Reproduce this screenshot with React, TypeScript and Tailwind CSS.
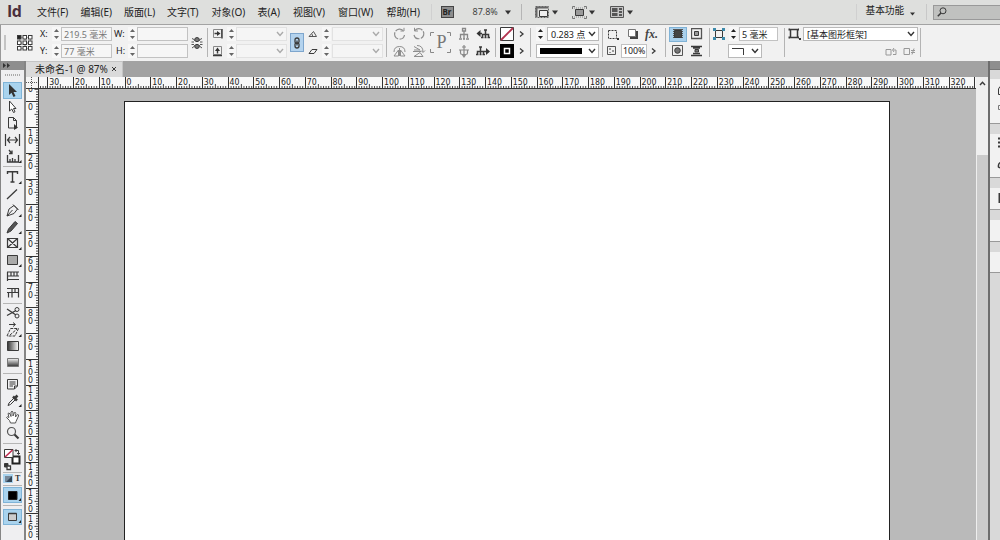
import React from "react";

const Icon = ({ w = 14, h = 14, className = "", children }: any) => (
    <svg
        width={w}
        height={h}
        viewBox={`0 0 ${w} ${h}`}
        fill="none"
        stroke="#3a3a3a"
        className={"shrink-0 " + className}
    >
        {children}
    </svg>
);

const Sep = ({ className = "" }: any) => (
    <div className={"w-px h-[29px] shrink-0 bg-[#b4b4b4] " + className} />
);

// two stacked cells, one for each line of the control bar
const Col = ({ className = "", children }: any) => (
    <div className={"flex flex-col gap-[3px] shrink-0 " + className}>
        {React.Children.map(children, (c) => (
            <div className="h-[14px] flex items-center">{c}</div>
        ))}
    </div>
);

const Spinner = ({ dark }: any) => (
    <Icon w={9} className="bg-[#f7f7f7]">
        <g fill={dark ? "#222" : "#666"} stroke="none">
            <path d="M2 5L4.500 2L7 5z" />
            <path d="M2 9L4.500 12L7 9z" />
        </g>
    </Icon>
);

const Chevron = ({ color = "#333", className = "" }: any) => (
    <Icon w={8} h={6} className={className}>
        <path d="M1 1L4 4.500L7 1" stroke={color} strokeWidth="1.400" />
    </Icon>
);

const Right = () => (
    <Icon w={6} h={8}>
        <path d="M1 1.500L4 4L1 6.500" strokeWidth="1.300" />
    </Icon>
);

const Input = ({ className = "", children }: any) => (
    <div
        className={
            "h-[14px] flex items-center border border-[#c2c2c2] whitespace-nowrap overflow-hidden pl-[2px] text-[9px] leading-none " +
            className
        }
    >
        {children}
    </div>
);

const Combo = ({ dim, className = "", children }: any) => (
    <div
        className={
            "h-[14px] flex items-center justify-between border whitespace-nowrap pl-[3px] pr-[2px] text-[9px] leading-none " +
            (dim ? "border-[#e2e2e2] bg-[#f5f5f5] " : "border-[#b9b9b9] bg-white ") +
            className
        }
    >
        <span className="flex items-center">{children}</span>
        <Chevron color={dim ? "#aaa" : "#333"} />
    </div>
);

const menus = [
    { title: "文件(F)", cls: "w-[43.5px]" },
    { title: "编辑(E)", cls: "w-[43.5px]" },
    { title: "版面(L)", cls: "w-[43px]" },
    { title: "文字(T)", cls: "w-[44.5px]" },
    { title: "对象(O)", cls: "w-[46px]" },
    { title: "表(A)", cls: "w-[35.5px]" },
    { title: "视图(V)", cls: "w-[45px]" },
    { title: "窗口(W)", cls: "w-[48.5px]" },
    { title: "帮助(H)", cls: "w-[44px]" },
];

const Down = ({ className = "" }: any) => (
    <Icon w={6} h={5} className={className}>
        <path d="M0 0.500H6L3 4.500z" fill="#333" stroke="none" />
    </Icon>
);

const MenuBar = () => (
    <div className="h-[25px] flex items-center shrink-0 bg-[#dedfdd] border-b border-[#a3a3a3] text-[10px] text-[#222]">
        <div className="w-[37px] shrink-0 pl-[7px] font-['Open_Sans',sans-serif] text-[16px] leading-none font-bold text-[#4b2f3c] tracking-[-0.5px] pb-[3px]">
            Id
        </div>
        {menus.map((m) => (
            <div key={m.title} className={"shrink-0 whitespace-nowrap " + m.cls}>
                {m.title}
            </div>
        ))}
        <div className="w-px h-4 bg-[#d0d0d0]" />
        <div className="ml-[9px] w-[13px] h-[12px] border border-[#444] bg-[#8d8d8d] text-[#222] text-[8px] leading-[10px] font-bold text-center">
            Br
        </div>
        <div className="ml-[19px] w-[32px] text-[9px] text-[#444]">87.8%</div>
        <Down />
        <div className="ml-[10px] w-px h-4 bg-[#b5b5b5]" />
        <Icon className="ml-[13px]" h={12}>
            <path d="M0.500 0.500H13.500V11.500H0.500z" stroke="#666" strokeDasharray="2 1" />
            <path d="M1 1.500H13M1.500 2V11" strokeWidth="2" stroke="#666" />
            <path d="M4.500 4.500H12.500V10.500H4.500z" fill="#eee" />
        </Icon>
        <Down className="ml-[3px]" />
        <Icon w={15} h={13} className="ml-[14px]">
            <path d="M0.500 3V0.500H3M12 0.500H14.500V3M14.500 10V12.500H12M3 12.500H0.500V10" stroke="#777" />
            <path d="M3.500 3.500H11.500V9.500H3.500z" fill="#999" />
            <path d="M2 2H13M2 11H13" stroke="#888" strokeDasharray="1 1" />
        </Icon>
        <Down className="ml-[2px]" />
        <Icon w={14} h={12} className="ml-[15px]">
            <path d="M0.500 0.500H13.500V11.500H0.500z" fill="#c5c5c5" stroke="#555" />
            <path d="M2 2H7.500V6H2zM2 7H7.500V10H2zM9 2H12V4H9zM9 5H12V7H9zM9 8H12V10H9z" fill="#555" stroke="none" />
        </Icon>
        <Down className="ml-[3px]" />
        <div className="ml-[223px] w-px h-4 bg-[#d0d0d0]" />
        <div className="ml-[9px] w-[44px] shrink-0 text-[9.7px] pb-[2px]">基本功能</div>
        <Icon w={5} h={4} className="mt-[3px]">
            <path d="M0 0.500H5L2.500 3.500z" fill="#333" stroke="none" />
        </Icon>
        <div className="ml-[11px] w-px h-4 bg-[#c8c8c8]" />
        <div className="ml-[6px] flex-1 h-[15px] flex items-center border border-r-0 border-[#999] bg-[#c0c1bf] pl-[3px]">
            <Icon w={10} h={10}>
                <circle cx="6" cy="3.800" r="3" />
                <path d="M4 6L0.800 9.300" strokeWidth="1.500" />
            </Icon>
        </div>
    </div>
);

const points = [0, 1, 2, 3, 4, 5, 6, 7, 8];

const ControlBar = () => (
    <div className="h-[36px] flex items-center shrink-0 bg-[#f1f1f1] border-l border-[#999] pb-[1px] text-[9px] text-[#222]">
        <div className="ml-[3px] w-[2px] h-[15px] shrink-0 bg-[#c4c4c4]" />
        <Icon w={16} h={16} className="ml-[11px]">
            <path d="M2.500 2.500H13.500V13.500H2.500zM8 2V14M2 8H14" stroke="#777" strokeDasharray="1 1" />
            {points.map((i) => (
                <rect
                    key={i}
                    x={0.5 + (i % 3) * 5.5}
                    y={0.5 + Math.floor(i / 3) * 5.5}
                    width="3.500"
                    height="3.500"
                    fill={i === 0 ? "#222" : "#fff"}
                />
            ))}
        </Icon>
        <Col className="ml-[7px] w-[12px]">
            <span>X:</span>
            <span>Y:</span>
        </Col>
        <Col className="w-[9px]">
            <Spinner />
            <Spinner />
        </Col>
        <Col className="w-[53px] text-[#777]">
            <Input className="w-[51px] bg-[#f6f6f6]">219.5 毫米</Input>
            <Input className="w-[51px] bg-[#f6f6f6]">77 毫米</Input>
        </Col>
        <Col className="w-[14px]">
            <span>W:</span>
            <span className="pl-[2px]">H:</span>
        </Col>
        <Col className="w-[9px]">
            <Spinner />
            <Spinner />
        </Col>
        <Col className="w-[51px]">
            <Input className="w-[51px] bg-[#f6f6f6]" />
            <Input className="w-[51px] bg-[#f6f6f6]" />
        </Col>
        <Icon w={12} className="ml-[3px]">
            <path d="M3.500 4.500Q3.500 1.500 6 1.500T8.500 4.500Q6 7 3.500 4.500zM3.500 9.500Q3.500 12.500 6 12.500T8.500 9.500Q6 7 3.500 9.500z" fill="#777" />
            <path d="M1 2.500L3 3.500M11 2.500L9 3.500M0.500 6H3M9 6H11.500M0.500 8.500H3M9 8.500H11.500M1 12L3 10.500M11 12L9 10.500" stroke="#555" />
        </Icon>
        <Sep className="ml-[4px]" />
        <Col className="ml-[4px] w-[15px]">
            <Icon w={12} h={12}>
                <path d="M1.500 1.500H9.500V9.500H1.500z" stroke="#888" />
                <path d="M10 1V10.500M2.500 5.500H6" strokeWidth="1.400" />
                <path d="M5 3L8.500 5.500L5 8z" fill="#333" stroke="none" />
            </Icon>
            <Icon w={12} h={12}>
                <path d="M1.500 1.500H9.500V9.500H1.500z" stroke="#888" />
                <path d="M1 10.500H10M5.500 8.500V6" strokeWidth="1.400" />
                <path d="M3 6L5.500 2.500L8 6z" fill="#333" stroke="none" />
            </Icon>
        </Col>
        <Col className="w-[9px]">
            <Spinner />
            <Spinner />
        </Col>
        <Col className="w-[51px]">
            <Combo dim className="w-[51px]" />
            <Combo dim className="w-[51px]" />
        </Col>
        <div className="ml-[3px] w-[14px] h-[19px] shrink-0 flex items-center justify-center bg-[#b4d3ee] border border-[#7ea6cd]">
            <Icon w={8} h={12}>
                <path d="M2 5V3Q2 1 4 1T6 3V5Q6 6 4 6T2 5M2 7V9Q2 11 4 11T6 9V7Q6 6 4 6T2 7M4 3.500V8.500" strokeWidth="1.300" />
            </Icon>
        </div>
        <Col className="ml-[4px] w-[14px]">
            <Icon w={10} h={10}>
                <path d="M1 7.500H8.500L5.500 2.500zM4.500 7Q4.500 5.500 3.800 5" stroke="#555" />
            </Icon>
            <Icon w={10} h={10}>
                <path d="M1 7.500L4 3.500H9L6 7.500z" />
            </Icon>
        </Col>
        <Col className="w-[9px]">
            <Spinner />
            <Spinner />
        </Col>
        <Col className="ml-px w-[51px]">
            <Combo dim className="w-[51px]" />
            <Combo dim className="w-[51px]" />
        </Col>
        <Sep className="ml-[3px]" />
        <Col className="ml-[6px] w-[19px]">
            <Icon>
                <path d="M10 3.500A5 5 0 1 0 11.500 8" stroke="#8d8d8d" strokeWidth="1.200" strokeDasharray="8 1.500" />
                <path d="M7.500 4H11V0.800" stroke="#8d8d8d" />
            </Icon>
            <Icon>
                <path d="M1 12L5.500 6V12zM12 12L7.500 6V12zM1 8Q1 2.500 6.500 2.500T12 8M6.500 4V12" stroke="#8d8d8d" />
            </Icon>
        </Col>
        <Col className="w-[18px]">
            <Icon>
                <path d="M3 3.500A5 5 0 1 1 2 8" stroke="#8d8d8d" strokeWidth="1.200" strokeDasharray="8 1.500" />
                <path d="M6 4H2.500V0.800" stroke="#8d8d8d" />
            </Icon>
            <Icon>
                <path d="M2 2.500L8 6H2M2 12.500L8 8.500L11 12.500zM5 1.500Q11 1.500 11 8M9 6.500L11 8.500L13 6.500M1 7.500H9" stroke="#8d8d8d" />
            </Icon>
        </Col>
        <div className="w-[23px] h-[22px] shrink-0 relative flex items-center justify-center font-['Liberation_Serif',serif] text-[18px] text-[#777]">
            P
            <svg width="22" height="22" fill="none" stroke="#888" className="absolute left-0 top-0">
                <path d="M0.500 4V0.500H4M17 0.500H20.500V4M20.500 17V20.500H17M4 20.500H0.500V17" />
            </svg>
        </div>
        <Col className="ml-[5px] w-[18px]">
            <Icon w={12}>
                <path d="M4.500 1.500H7.500V4H4.500zM6 4V12M2.500 11V7.500H9.500V11M1 12H4M5 12H7M8 12H11" stroke="#888" strokeWidth="1.300" />
            </Icon>
            <Icon w={12}>
                <path d="M6 1V12.500M1 6H11M2.500 6V9Q2.500 10.500 4.500 10.500H7.500Q9.500 10.500 9.500 9V6M4 3H8M4.500 11L6 13L7.500 11" stroke="#888" strokeWidth="1.200" />
            </Icon>
        </Col>
        <Col className="w-[16px]">
            <Icon>
                <path d="M3.500 6.500H6M9.500 3V7M6.500 11V7.500H12.500V11M9.500 7V11M5 10.500H7.500M8.500 10.500H10.500M11.500 10.500H14M8 3H11" strokeWidth="1.500" />
                <path d="M4.500 3V10L0.500 6.500z" fill="#333" stroke="none" />
            </Icon>
            <Icon>
                <path d="M4.500 3V7M1.500 11V7.500H7.500V11M4.500 7V11M0 10.500H2.500M3.500 10.500H5.500M6.500 10.500H9M3 3H6M8 7.500H11" strokeWidth="1.500" />
                <path d="M10 4V11L14 7.500z" fill="#333" stroke="none" />
            </Icon>
        </Col>
        <Sep className="ml-[3px]" />
        <Col className="ml-[4px] w-[18px]">
            <Icon>
                <path d="M0.500 0.500H13.500V13.500H0.500z" fill="#fff" />
                <path d="M1 13L13 1" stroke="#b3334f" strokeWidth="1.800" />
            </Icon>
            <Icon>
                <path d="M0 0H14V14H0z" fill="#000" stroke="none" />
                <path d="M4.500 4.500H9.500V9.500H4.500z" stroke="#fff" strokeWidth="1.500" />
            </Icon>
        </Col>
        <Col className="ml-px w-[7px]">
            <Right />
            <Right />
        </Col>
        <Sep className="ml-[4px]" />
        <Col className="ml-[5px] w-[63px]">
            <>
                <Spinner dark />
                <Combo className="ml-[2px] w-[52px]">0.283 点</Combo>
            </>
            <Combo className="w-[63px]">
                <div className="w-[42px] h-[6px] bg-black" />
            </Combo>
        </Col>
        <Sep className="ml-[3px]" />
        <Col className="ml-[4px] w-[56px]">
            <>
                <Icon w={12}>
                    <path d="M1.500 3.500H9.500V11.500H1.500z" strokeDasharray="2 1" />
                    <path d="M10 11H12V13H10z" fill="#333" stroke="none" />
                </Icon>
                <Icon w={12} className="ml-[8px]">
                    <path d="M3 4H11V12H3z" fill="#444" stroke="none" />
                    <path d="M1.500 2.500H8.500V9.500H1.500z" fill="#fff" stroke="#777" />
                </Icon>
                <span className="ml-[6px] font-['Liberation_Serif',serif] italic font-bold text-[12px] leading-none text-[#444]">
                    fx.
                </span>
            </>
            <>
                <Icon w={10} h={10}>
                    <path d="M0.500 0.500H8.500V8.500H0.500z" stroke="#555" />
                    <path d="M2 2H4V4H2zM5 4H7V6H5zM2 6H4V7H2z" fill="#999" stroke="none" />
                </Icon>
                <div className="ml-[4px] w-[26px] h-[14px] flex items-center bg-white border border-[#c2c2c2] pl-px text-[8.8px] leading-none">
                    100%
                </div>
                <div className="ml-[4px]">
                    <Right />
                </div>
            </>
        </Col>
        <Sep className="ml-[2px]" />
        <Col className="ml-[3px] w-[22px]">
            <div className="w-[18px] h-[15px] flex items-center justify-center bg-[#a9d0ec] border border-[#7fb2d6]">
                <Icon w={12} h={12}>
                    <path d="M1 1.500H11M1 3.500H11M1 5.500H11M1 7.500H11M1 9.500H11" stroke="#555" />
                    <path d="M2.500 2.500H9.500V9.500H2.500z" fill="#444" />
                </Icon>
            </div>
            <Icon w={12} h={12} className="ml-[3px]">
                <path d="M0.500 0.500H10.500V10.500H0.500z" fill="#eee" stroke="#555" />
                <circle cx="5.500" cy="5.500" r="2.800" fill="#777" />
            </Icon>
        </Col>
        <Col className="w-[14px]">
            <Icon w={12} h={12}>
                <path d="M0.500 0.500H10.500V10.500H0.500z" stroke="#555" strokeWidth="1.300" />
                <path d="M3.500 3.500H7.500V7.500H3.500z" fill="#999" />
            </Icon>
            <Icon w={12} h={12}>
                <path d="M0 1.500H11M0 10.500H11M2 3H9M2 8.500H9" strokeWidth="1.300" />
                <path d="M4 4.500H7.500V7H4z" fill="#777" />
            </Icon>
        </Col>
        <Sep className="ml-[4px]" />
        <Col className="ml-[3px] w-[65px]">
            <>
                <Icon w={13} h={12}>
                    <path d="M2.500 2.500H9.500V9.500H2.500z" />
                    <path d="M0 0H3V3H0zM9 0H12V3H9zM0 9H3V12H0zM9 9H12V12H9z" fill="#3b89aa" stroke="none" />
                </Icon>
                <div className="ml-[3px]">
                    <Spinner dark />
                </div>
                <Input className="ml-px w-[39px] bg-white">5 毫米</Input>
            </>
            <Combo className="ml-[15px] w-[34px]">
                <Icon w={13} h={9}>
                    <path d="M0 1.500H11.500V8" />
                </Icon>
            </Combo>
        </Col>
        <Sep className="ml-[6px]" />
        <Col className="ml-[3px] w-[130px]">
            <>
                <Icon w={13} h={12}>
                    <path d="M2.500 1.500H9.500V9.500H2.500z" strokeWidth="1.500" />
                    <path d="M0.500 1.500H2M0.500 9.500H2M10 1.500H11M10 9.500H11" strokeWidth="2" />
                    <path d="M11 10H13V12H11z" fill="#333" stroke="none" />
                </Icon>
                <Combo className="ml-[2px] w-[115px]">[基本图形框架]</Combo>
            </>
            <div className="ml-[97px] flex gap-[5px]">
                <Icon w={13} h={9}>
                    <path d="M1 2.500H6V8H1zM9 1L7.500 3L9 5M8 3H11V7.500H8" stroke="#999" />
                </Icon>
                <Icon w={13} h={9}>
                    <path d="M1 1.500H6.500V7.500H1zM8 3.500H12M8 5.500H12M11 1.500L9 7.500" stroke="#999" />
                </Icon>
            </div>
        </Col>
        <Sep className="ml-[2px]" />
    </div>
);

const Corner = () => <path d="M18.500 15V12L15.500 15z" fill="#222" stroke="none" />;

const Tool = ({ active, children }: any) => (
    <div
        className={
            "h-[16.5px] w-[19px] flex items-center justify-center shrink-0 " +
            (active ? "bg-[#a9d3ee] outline outline-1 -outline-offset-1 outline-[#7fb4d8]" : "")
        }
    >
        <Icon w={19} h={16}>
            {children}
        </Icon>
    </div>
);

const Divider = ({ className = "h-[4.5px]" }: any) => (
    <div className={"w-[19px] flex items-center shrink-0 " + className}>
        <div className="h-px w-full bg-[#b5b5b5]" />
    </div>
);

const Toolbox = () => (
    <div className="w-[26px] shrink-0 flex flex-col bg-[#efeff1] border-l border-r-2 border-[#858585]">
        <div className="h-[9px] shrink-0 bg-[#8e8e8e] pl-[2px] pt-[2px]">
            <Icon w={8} h={5}>
                <path d="M0 0L3 2.500L0 5zM4 0L7 2.500L4 5z" fill="#333" stroke="none" />
            </Icon>
        </div>
        <div className="h-[12px] shrink-0 pt-[4px] pl-[4px]">
            <div className="w-[15px] h-[2px] border-y border-dotted border-[#aaa]" />
        </div>
        <div className="flex flex-col pl-[2px]">
            <Tool active>
                <path d="M6 2V13L8.500 10.800L10.500 15L12.500 14L10.500 10H14z" fill="#333" stroke="none" />
            </Tool>
            <Tool>
                <path d="M6.500 2V12L8.800 10L10.500 13.500L12 12.800L10.500 9.500H13z" fill="#fff" />
            </Tool>
            <Tool>
                <path d="M5.500 2.500H10.500L13.500 5.500V13H5.500zM10.500 2.500V5.500H13.500" />
                <path d="M11 9V15L15 12.500z" fill="#333" stroke="none" />
            </Tool>
            <Tool>
                <path d="M2.500 2V14M16.500 2V14M4.500 8H14.500M7 5L4.500 8L7 11M12 5L14.500 8L12 11" strokeWidth="1.200" />
            </Tool>
            <Tool>
                <path d="M4.500 7V14H15.500V7M7 13.500V11M9.500 13.500V10M12 13.500V11M6 2L8.500 5M9 2.500V5.500H6" strokeWidth="1.300" />
                <Corner />
            </Tool>
            <Divider />
            <Tool>
                <path d="M4.500 5V2.700H14.500V5M9.500 2.700V13M7.500 13H11.500" strokeWidth="1.400" />
                <Corner />
            </Tool>
            <Tool>
                <path d="M4 13L14 3.500" strokeWidth="1.300" />
            </Tool>
            <Tool>
                <path d="M4 14L6 7L11 3.500L14.500 7L11 11.500zM4 14L9.500 8M10 2.500L15.500 8" />
                <Corner />
            </Tool>
            <Tool>
                <path d="M4 14L5.500 10L12 2.500L14.500 4.500L8 12z" fill="#555" />
                <Corner />
            </Tool>
            <Tool>
                <path d="M4.500 3.500H14.500V12.500H4.500zM4.500 3.500L14.500 12.500M14.500 3.500L4.500 12.500" strokeWidth="1.200" />
                <Corner />
            </Tool>
            <Tool>
                <path d="M4.500 3.500H14.500V12.500H4.500z" fill="#aaa" />
                <Corner />
            </Tool>
            <Tool>
                <path d="M4 4H16M4 8H16M4 11.500H16M4.500 4V13M8 4V8M11 4V8M14 4V8" strokeWidth="1.200" />
            </Tool>
            <Tool>
                <path d="M4 3.500H16M4 7.500H16M5.500 8V12.500M9 4V12.500M12 4V8M15.500 4V12.500" strokeWidth="1.200" />
            </Tool>
            <Divider className="h-[4px]" />
            <Tool>
                <path d="M4 4L13 10M4 10.500L13 5.500" strokeWidth="1.300" />
                <circle cx="14" cy="4.500" r="2" />
                <circle cx="14" cy="11" r="2" />
            </Tool>
            <Tool>
                <path d="M4 14L7.500 6.500H15.500L12 14zM7 13L14 7" strokeDasharray="3 1" />
                <path d="M6 2.500H12M10 0.500L12.500 2.500L10 4.500" />
                <Corner />
            </Tool>
            <Tool>
                <defs>
                    <linearGradient id="gx">
                        <stop offset="0" stopColor="#333" />
                        <stop offset="1" stopColor="#fff" />
                    </linearGradient>
                    <linearGradient id="gy" x2="0" y2="1">
                        <stop offset="0" stopColor="#f5f5f5" />
                        <stop offset="1" stopColor="#333" />
                    </linearGradient>
                </defs>
                <path d="M4.500 3.500H15.500V12.500H4.500z" fill="url(#gx)" />
            </Tool>
            <Tool>
                <path d="M4.500 3.500H15.500V11.500H4.500z" fill="url(#gy)" stroke="#777" />
            </Tool>
            <Divider />
            <Tool>
                <path d="M4.500 3.500H14.500V10L11.500 13H4.500zM11.500 13V10H14.500M6.500 6H12.500M6.500 8H12.500M6.500 10H10" />
            </Tool>
            <Tool>
                <path d="M5 13.500L6 11L11 6L12.500 7.500L7.500 12.500z" />
                <path d="M10 4.500L14 8.500M12 6L14.500 3.500" strokeWidth="2.500" />
                <Corner />
            </Tool>
            <Tool>
                <path
                    d="M6.500 11.500L3.500 8.500Q4 7 6 8.500L5 4.500Q6 3.200 7 5L8 7.500V3Q9 1.500 10 3V7L11.500 3.500Q12.800 3 12.800 4.500L12.500 8L14.500 5.500Q16 5.500 15.500 7L13 12.500L12.500 14H7.500z"
                    fill="#fff"
                    stroke="#555"
                />
            </Tool>
            <Tool>
                <circle cx="8.500" cy="6.500" r="4" strokeWidth="1.200" stroke="#555" />
                <path d="M11.500 9.500L15.500 13.500" strokeWidth="2.200" />
            </Tool>
            <Divider className="h-[3px]" />
            <Icon w={20} h={27}>
                <path d="M9.500 11.500H16.500V18.500H9.500z" stroke="#222" strokeWidth="2" fill="#fff" />
                <path d="M1.500 4.500H10V12.500H1.500z" fill="#fff" />
                <path d="M2 12L9.500 5" stroke="#c02a50" strokeWidth="1.600" />
                <path d="M12 5.500H15.500V9M13.500 4L12 5.500L13.500 7M14 8L15.500 9.500L17 8" />
                <path d="M1.500 18.500H5V22H1.500z" fill="#333" />
                <path d="M4 21H7.500V24.500H4z" fill="#fff" strokeWidth="1.300" />
            </Icon>
            <Divider className="h-[2px]" />
            <div className="h-[10px] flex items-center">
                <div className="w-[10px] h-[9px] flex items-center justify-center bg-[#a9d3ee]">
                    <Icon w={7} h={6}>
                        <path d="M0 0H7V6H0z" fill="#789" stroke="none" />
                        <path d="M7 0V6H1z" fill="#345" stroke="none" />
                    </Icon>
                </div>
                <span className="ml-[2px] font-['Liberation_Serif',serif] text-[8px] leading-none font-bold text-[#333]">
                    T
                </span>
            </div>
            <Divider className="h-[3px]" />
            <div className="w-[19px] h-[16px] bg-[#a9d3ee] border border-[#7fb4d8] shrink-0">
                <Icon w={17} h={14}>
                    <path d="M4.500 3.500H13V11.500H4.500z" fill="#000" stroke="#222" />
                    <path d="M17 13V10L14.500 13z" fill="#222" stroke="none" />
                </Icon>
            </div>
            <Divider className="h-[6px]" />
            <div className="w-[19px] h-[16px] bg-[#a9d3ee] border border-[#7fb4d8] shrink-0">
                <Icon w={17} h={14}>
                    <path d="M4.500 3.500H12.500V10.500H4.500z" fill="#ccc" />
                    <path d="M4.500 3.500H12.500" strokeWidth="1.500" />
                    <path d="M17 13V10L14.500 13z" fill="#222" stroke="none" />
                </Icon>
            </div>
        </div>
    </div>
);

const STEP = 25.75;
const minor = [1, 2, 3, 4, 5, 6, 7, 8, 9];
const across = Array.from({ length: 38 }, (_, i) => i - 4);
const down = Array.from({ length: 18 }, (_, i) => i - 1);

const TopRuler = () => (
    <div className="h-[12px] flex-1 min-w-0 overflow-hidden bg-[#f8f8f8] border-b border-[#333]">
        <div className="flex -ml-[17.5px]">
            {across.map((n) => (
                <div
                    key={n}
                    className="w-[25.75px] h-[11px] shrink-0 relative pl-[2px] text-[8.7px] leading-[11px] text-[#222]"
                >
                    {n > -4 && n < 33 && Math.abs(n) * 10}
                    <svg width="26" height="11" stroke="#333" className="absolute left-0 top-0">
                        <path d="M0.500 0V11" />
                        {minor.map((m) => (
                            <path key={m} d={`M${0.5 + (m * STEP) / 10} ${m === 5 ? 7 : 9}V11`} strokeWidth="0.900" />
                        ))}
                    </svg>
                </div>
            ))}
        </div>
    </div>
);

// the first cell starts above the visible part, so its leading digit is left blank
const SideRuler = () => (
    <div className="w-[13px] shrink-0 overflow-hidden bg-[#f8f8f8] border-r border-[#333]">
        <div className="-mt-[13.5px]">
            {down.map((n) => (
                <div
                    key={n}
                    className="h-[25.75px] relative flex flex-col pt-[1.5px] pl-[2px] text-[8.7px] leading-[8px] text-[#222]"
                >
                    {String(Math.abs(n) * 10)
                        .split("")
                        .map((d, i) => (
                            <span key={i} className="h-[8px]">
                                {n < 0 && i === 0 ? "" : d}
                            </span>
                        ))}
                    <svg width="12" height="26" stroke="#333" className="absolute left-0 top-0">
                        <path d="M0 0.500H12" />
                        {minor.map((m) => (
                            <path key={m} d={`M${m === 5 ? 8.5 : 10} ${0.5 + (m * STEP) / 10}H12`} strokeWidth="0.900" />
                        ))}
                    </svg>
                </div>
            ))}
        </div>
    </div>
);

const Document = () => (
    <div className="flex-1 min-w-0 flex flex-col bg-[#bababa]">
        <div className="h-[16px] shrink-0 flex bg-[#a2a2a2]">
            <div className="w-[97px] flex items-center justify-between bg-[#dadada] border-t border-r border-[#c4c4c4] pl-[9px] pr-[5px] pb-[1px] text-[10px] leading-none text-[#222] whitespace-nowrap">
                <span>未命名-1 @ 87%</span>
                <Icon w={6} h={6}>
                    <path d="M1 1L5 5M5 1L1 5" />
                </Icon>
            </div>
        </div>
        <div className="flex-1 min-h-0 flex">
            <div className="flex-1 min-w-0 flex flex-col font-['DejaVu_Sans_Condensed','DejaVu_Sans',sans-serif]">
                <div className="flex shrink-0">
                    <Icon w={13} h={12} className="bg-[#f5f5f5]">
                        <path d="M0 5.500H13M5.500 0V12" strokeDasharray="1 1" stroke="#555" />
                        <path d="M12.500 0V12M0 11.500H13" />
                    </Icon>
                    <TopRuler />
                </div>
                <div className="flex-1 min-h-0 flex">
                    <SideRuler />
                    <div className="flex-1 overflow-hidden pt-[12px] pl-[85px]">
                        <div className="w-[766px] h-full bg-white border border-b-0 border-[#222]" />
                    </div>
                </div>
            </div>
            <div className="w-[12px] shrink-0 flex flex-col bg-[#cbcbcb] border-l border-[#eee]">
                <div className="h-[78px] bg-[#efefef] flex justify-center pt-[4px]">
                    <Icon w={7} h={5}>
                        <path d="M1 4L3.500 1.200L6 4" strokeWidth="1.400" />
                    </Icon>
                </div>
            </div>
        </div>
    </div>
);

const Group = ({ className = "", children }: any) => (
    <div className={"shrink-0 mb-[10px] bg-[#f2f2f2] border-b border-[#999] overflow-hidden " + className}>
        {children}
    </div>
);

const Dock = () => (
    <div className="w-[12px] shrink-0 flex flex-col bg-[#d9d9d9] border-l-2 border-[#6d6d6d]">
        <div className="h-[9px] mb-[9px] shrink-0 bg-[#8e8e8e] border-b border-[#777]" />
        <Group className="h-[45px]">
            <Icon w={10} h={40}>
                <path d="M10 7.500L8.500 10V15.500H10" />
                <path d="M10 26.500H8.500V30.500H10" stroke="#777" />
            </Icon>
        </Group>
        <Group className="h-[44px]">
            <Icon w={10} h={40}>
                <path d="M8 4.500H10M8 8.500H10M8 12.500H10" strokeWidth="2" />
                <path d="M10 28.500Q8 30 8.500 33L10 34" strokeWidth="1.500" />
            </Icon>
        </Group>
        <Group className="h-[22px]">
            <Icon w={10} h={20}>
                <path d="M9.500 5V15" strokeWidth="2" />
            </Icon>
        </Group>
        <Group className="h-[22px]" />
        <Group className="h-[21px]" />
    </div>
);

export default function App() {
    return (
        <div className="w-[1000px] h-[540px] flex flex-col overflow-hidden bg-[#bababa] font-['Noto_Sans','Noto_Sans_CJK_SC',sans-serif]">
            <MenuBar />
            <ControlBar />
            <div className="flex-1 min-h-0 flex">
                <Toolbox />
                <Document />
                <Dock />
            </div>
        </div>
    );
}
